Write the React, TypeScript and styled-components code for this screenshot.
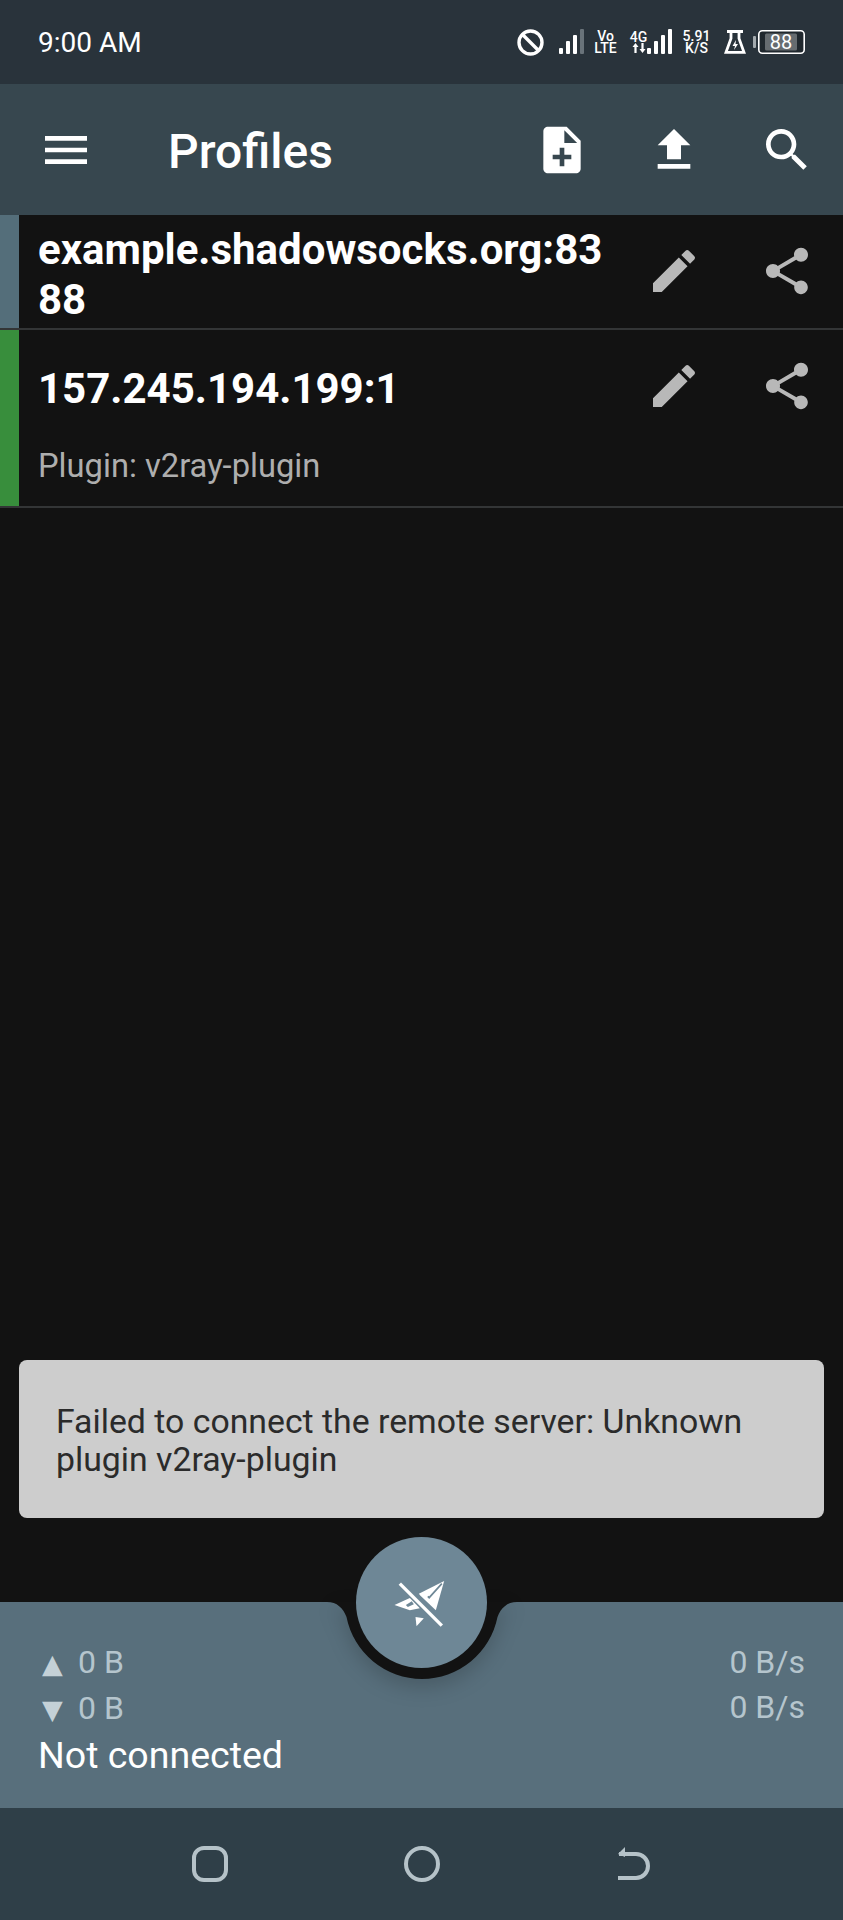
import React from 'react';
import styled, { createGlobalStyle } from 'styled-components';

const GlobalStyle = createGlobalStyle`
  html, body {
    margin: 0;
    padding: 0;
    background: #121212;
    font-family: Roboto, "Liberation Sans", sans-serif;
  }
`;

const Page = styled.div`
  position: relative;
  display: flex;
  flex-direction: column;
  width: 843px;
  height: 1920px;
  overflow: hidden;
  background: #121212;
`;

const StatusBar = styled.div`
  display: flex;
  align-items: center;
  justify-content: space-between;
  height: 84px;
  padding: 0 38px;
  background: #29333b;
  color: #fff;
`;

const Clock = styled.div`
  font-size: 28px;
`;

const StatusIcons = styled.div`
  display: flex;
  align-items: center;
`;

const TinyStack = styled.div<{ $w: number; $ml: number }>`
  display: flex;
  flex-direction: column;
  align-items: center;
  width: ${p => p.$w}px;
  margin-left: ${p => p.$ml}px;
  font-size: 14px;
  line-height: 12.5px;
  font-weight: 500;
  white-space: nowrap;
`;

const Toolbar = styled.div`
  display: flex;
  align-items: center;
  height: 131px;
  background: #37474f;
`;

const MenuCell = styled.div`
  display: flex;
  align-items: center;
  justify-content: center;
  width: 131px;
  color: #fff;
`;

const Title = styled.div`
  flex: 1;
  margin: 4px 0 0 37px;
  font-size: 48px;
  font-weight: 500;
  color: #fff;
`;

const IconCell = styled.div<{ $color?: string }>`
  display: flex;
  align-items: center;
  justify-content: center;
  width: 112.5px;
  height: 112px;
  flex: none;
  color: ${p => p.$color || '#fff'};
`;

const List = styled.div`
  flex: 1;
`;

const Row = styled.div<{ $h: number }>`
  display: flex;
  height: ${p => p.$h}px;
  border-bottom: 2px solid #333536;
`;

const Stripe = styled.div<{ $color: string }>`
  width: 19px;
  flex: none;
  background: ${p => p.$color};
`;

const RowBody = styled.div<{ $top: number }>`
  flex: 1;
  min-width: 0;
  padding: ${p => p.$top}px 14px 0 19px;
`;

const RowTitle = styled.div`
  font-size: 42px;
  line-height: 50px;
  font-weight: 700;
  color: #fff;
  word-break: break-all;
`;

const RowSub = styled.div`
  margin-top: 32px;
  font-size: 32.7px;
  line-height: 40px;
  color: #aeaeae;
`;

const RowActions = styled.div`
  display: flex;
  flex: none;
`;

const Snackbar = styled.div`
  position: absolute;
  left: 19px;
  right: 19px;
  top: 1360px;
  box-sizing: border-box;
  height: 158px;
  padding: 43px 37px 0;
  border-radius: 8px;
  background: #cdcdcd;
  color: #2b2b2b;
  font-size: 33.8px;
  line-height: 38px;
`;

const StatsBar = styled.div`
  position: relative;
  display: flex;
  justify-content: space-between;
  box-sizing: border-box;
  height: 206px;
  padding: 38px 38px 0;
  background: #586f7c;
`;

const Cradle = styled.svg`
  position: absolute;
  left: 326.5px;
  top: 0;
  filter: drop-shadow(0 8px 10px rgba(0, 0, 0, 0.18));
`;

const Fab = styled.div`
  position: absolute;
  left: 356px;
  top: -65px;
  display: flex;
  align-items: center;
  justify-content: center;
  width: 131px;
  height: 131px;
  border-radius: 50%;
  background: #6e8796;
`;

const StatLine = styled.div`
  font-size: 32px;
  line-height: 45px;
  color: #b5c5cd;
`;

const StatRight = styled(StatLine)`
  text-align: right;
`;

const Arrow = styled.span`
  display: inline-block;
  box-sizing: border-box;
  width: 40px;
  padding-left: 4px;
  font-size: 27px;
  font-family: "DejaVu Sans", sans-serif;
  color: #c4d1d7;
`;

const Connection = styled.div`
  margin-top: -2px;
  font-size: 37.5px;
  line-height: 50px;
  color: #fff;
`;

const NavBar = styled.div`
  display: flex;
  align-items: center;
  justify-content: center;
  gap: 174px;
  height: 112px;
  background: #2f3f48;
  color: #b5c2c8;
`;

const MaterialIcon = ({ d, size = 56 }: { d: string; size?: number }) => (
  <svg width={size} height={size} viewBox="0 0 24 24" fill="currentColor">
    <path d={d} />
  </svg>
);

const MENU = 'M3 18h18v-2H3v2zm0-5h18v-2H3v2zm0-7v2h18V6H3z';
const NOTE_ADD = 'M14 2H6c-1.1 0-1.99.9-1.99 2L4 20c0 1.1.89 2 1.99 2H18c1.1 0 2-.9 2-2V8l-6-6zm2 14h-3v3h-2v-3H8v-2h3v-3h2v3h3v2zm-3-7V3.5L18.5 9H13z';
const UPLOAD = 'M9 16h6v-6h4l-7-7-7 7h4zm-4 2h14v2H5z';
const SEARCH = 'M15.5 14h-.79l-.28-.27C15.41 12.59 16 11.11 16 9.5 16 5.91 13.09 3 9.5 3S3 5.91 3 9.5 5.91 16 9.5 16c1.61 0 3.09-.59 4.23-1.57l.27.28v.79l5 4.99L20.49 19l-4.99-5zm-6 0C7.01 14 5 11.99 5 9.5S7.01 5 9.5 5 14 7.01 14 9.5 11.99 14 9.5 14z';
const EDIT = 'M3 17.25V21h3.75L17.81 9.94l-3.75-3.75L3 17.25zM20.71 7.04c.39-.39.39-1.02 0-1.41l-2.34-2.34c-.39-.39-1.02-.39-1.41 0l-1.83 1.83 3.75 3.75 1.83-1.83z';
const SHARE = 'M18 16.08c-.76 0-1.44.3-1.96.77L8.91 12.7c.05-.23.09-.46.09-.7s-.04-.47-.09-.7l7.05-4.11c.54.5 1.25.81 2.04.81 1.66 0 3-1.34 3-3s-1.34-3-3-3-3 1.34-3 3c0 .24.04.47.09.7L8.04 9.81C7.5 9.31 6.79 9 6 9c-1.66 0-3 1.34-3 3s1.34 3 3 3c.79 0 1.5-.31 2.04-.81l7.12 4.16c-.05.21-.08.43-.08.65 0 1.61 1.31 2.92 2.92 2.92 1.61 0 2.92-1.31 2.92-2.92s-1.31-2.92-2.92-2.92z';

const Signal = ({ ml, dimLast }: { ml: number; dimLast?: boolean }) => (
  <svg width="26" height="26" viewBox="0 0 26 26" style={{ marginLeft: ml }}>
    <rect x="0" y="19" width="4" height="6" rx="1" fill="#fff" />
    <rect x="7" y="12" width="4" height="13" rx="1" fill="#fff" />
    <rect x="14" y="6" width="4" height="19" rx="1" fill="#fff" />
    <rect x="21" y="0" width="4" height="25" rx="1" fill={dimLast ? '#69737a' : '#fff'} />
  </svg>
);

const BlockIcon = () => (
  <svg width="27" height="27" viewBox="0 0 27 27" fill="none" stroke="#fff" strokeWidth="3.4">
    <circle cx="13.5" cy="13.5" r="11.5" />
    <path d="M5.5 5.5l16 16" />
  </svg>
);

const DataArrows = () => (
  <svg width="14" height="10" viewBox="0 0 14 10" fill="#fff">
    <path d="M3.5 0L6.5 4H4.6V10H2.4V4H.5z" />
    <path d="M10.5 10L7.5 6H9.4V0H11.6V6H13.5z" />
  </svg>
);

const FlaskIcon = () => (
  <svg width="22" height="24" viewBox="0 0 22 24" style={{ marginLeft: 13 }}>
    <path d="M3 1.5h16M7 2v6.5L2 22.3h18L15 8.5V2" fill="none" stroke="#fff" strokeWidth="2.8" />
    <path d="M12 10l-3.5 6h2.5l-1 4 4-6h-2.5z" fill="#fff" />
  </svg>
);

const BatteryIcon = () => (
  <svg width="52" height="24" viewBox="0 0 52 24" style={{ marginLeft: 7 }}>
    <rect x="0" y="6" width="3" height="12" rx="1" fill="#a3aaae" />
    <rect x="5.8" y="0.8" width="45.4" height="22.4" rx="3.5" fill="#20282e" stroke="#fff" strokeWidth="1.6" />
    <rect x="12" y="3.5" width="32" height="17" rx="1.5" fill="#666c70" />
    <text x="28" y="19" textAnchor="middle" fontSize="20" fill="#fff" fontFamily="Roboto, sans-serif">88</text>
  </svg>
);

const PlaneOffIcon = () => (
  <svg width="58" height="52" viewBox="217.5 168 174 156">
    <g fill="#fff">
      <path d="M295 218L371 180L346 268L300 224Z" />
      <path d="M222 252L268 231L298 262L268 268Z" />
      <path d="M285 288L310 292L288 316Z" />
    </g>
    <path d="M364 188L326 230L322 226" fill="none" stroke="#6e8796" strokeWidth="5" />
    <path d="M256 252L274 241L280 250L262 258Z" fill="#6e8796" />
    <path d="M247 183L369 305" stroke="#6e8796" strokeWidth="13" />
    <path d="M238 188L364 314" stroke="#fff" strokeWidth="10" />
  </svg>
);

const App = () => (
  <Page>
    <GlobalStyle />
    <StatusBar>
      <Clock>9:00 AM</Clock>
      <StatusIcons>
        <BlockIcon />
        <Signal ml={15} dimLast />
        <TinyStack $w={23} $ml={9}>
          <span>Vo</span>
          <span>LTE</span>
        </TinyStack>
        <TinyStack $w={19} $ml={12}>
          <span>4G</span>
          <DataArrows />
        </TinyStack>
        <Signal ml={-1} />
        <TinyStack $w={29} $ml={9}>
          <span>5.91</span>
          <span>K/S</span>
        </TinyStack>
        <FlaskIcon />
        <BatteryIcon />
      </StatusIcons>
    </StatusBar>
    <Toolbar>
      <MenuCell>
        <MaterialIcon d={MENU} />
      </MenuCell>
      <Title>Profiles</Title>
      <IconCell><MaterialIcon d={NOTE_ADD} /></IconCell>
      <IconCell><MaterialIcon d={UPLOAD} /></IconCell>
      <IconCell><MaterialIcon d={SEARCH} /></IconCell>
    </Toolbar>
    <List>
      <Row $h={113}>
        <Stripe $color="#546e7a" />
        <RowBody $top={10}>
          <RowTitle>example.shadowsocks.org:8388</RowTitle>
        </RowBody>
        <RowActions>
          <IconCell $color="#b8b8b8"><MaterialIcon d={EDIT} /></IconCell>
          <IconCell $color="#b8b8b8"><MaterialIcon d={SHARE} /></IconCell>
        </RowActions>
      </Row>
      <Row $h={176}>
        <Stripe $color="#388e3c" />
        <RowBody $top={34}>
          <RowTitle>157.245.194.199:1</RowTitle>
          <RowSub>Plugin: v2ray-plugin</RowSub>
        </RowBody>
        <RowActions>
          <IconCell $color="#b8b8b8"><MaterialIcon d={EDIT} /></IconCell>
          <IconCell $color="#b8b8b8"><MaterialIcon d={SHARE} /></IconCell>
        </RowActions>
      </Row>
    </List>
    <Snackbar>Failed to connect the remote server: Unknown plugin v2ray-plugin</Snackbar>
    <StatsBar>
      <Cradle width="190" height="78" viewBox="0 0 190 78">
        <path d="M0 0C10 0 16 6 19.5 15A77 77 0 0 0 170.5 15C174 6 180 0 190 0Z" fill="#121212" />
      </Cradle>
      <Fab><PlaneOffIcon /></Fab>
      <div>
        <StatLine><Arrow>▲</Arrow>0 B</StatLine>
        <StatLine><Arrow>▼</Arrow>0 B</StatLine>
        <Connection>Not connected</Connection>
      </div>
      <div>
        <StatRight>0 B/s</StatRight>
        <StatRight>0 B/s</StatRight>
      </div>
    </StatsBar>
    <NavBar>
      <svg width="38" height="38" viewBox="0 0 38 38" fill="none" stroke="currentColor" strokeWidth="4">
        <rect x="3" y="3" width="32" height="32" rx="10" />
      </svg>
      <svg width="38" height="38" viewBox="0 0 38 38" fill="none" stroke="currentColor" strokeWidth="4">
        <circle cx="19" cy="19" r="16" />
      </svg>
      <svg width="38" height="38" viewBox="0 0 38 38" fill="none" stroke="currentColor" strokeWidth="4">
        <path d="M4 9H21A12 12 0 0 1 21 33H3" />
        <path d="M10 2L3 9L10 12" fill="currentColor" stroke="none" />
      </svg>
    </NavBar>
  </Page>
);

export default App;
